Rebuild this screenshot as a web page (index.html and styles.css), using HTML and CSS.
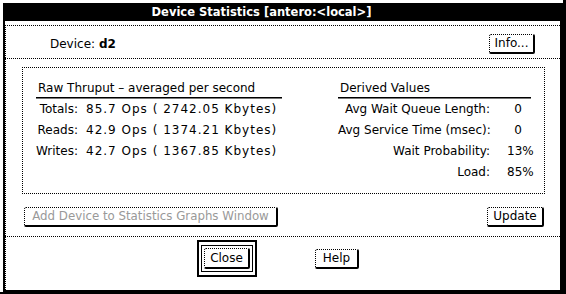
FILE: index.html
```html
<!DOCTYPE html>
<html lang="en">

<head>
    <meta charset="UTF-8" />
    <title>Device Statistics</title>
    <link rel="stylesheet" href="styles.css">
</head>

<body>
    <div class="shell">
        <div class="window">
            <div class="titlebar">Device Statistics [antero:&lt;local&gt;]</div>

            <div class="pane pane-device">
                <div class="device">Device: <b>d2</b></div>
                <button class="btn btn-info">Info...</button>
            </div>

            <div class="pane pane-stats">
                <div class="group">
                    <div class="col col-raw">
                        <div class="col-head">Raw Thruput &ndash; averaged per second</div>
                        <div class="row"><span class="lbl">Totals:</span><span class="val">85.7 Ops ( 2742.05 Kbytes)</span></div>
                        <div class="row"><span class="lbl">Reads:</span><span class="val">42.9 Ops ( 1374.21 Kbytes)</span></div>
                        <div class="row"><span class="lbl">Writes:</span><span class="val">42.7 Ops ( 1367.85 Kbytes)</span></div>
                    </div>
                    <div class="col col-derived">
                        <div class="col-head">Derived Values</div>
                        <div class="row"><span class="lbl">Avg Wait Queue Length:</span><span class="val">0</span></div>
                        <div class="row"><span class="lbl">Avg Service Time (msec):</span><span class="val">0</span></div>
                        <div class="row"><span class="lbl">Wait Probability:</span><span class="val">13%</span></div>
                        <div class="row"><span class="lbl">Load:</span><span class="val">85%</span></div>
                    </div>
                </div>
                <div class="actions">
                    <button class="btn btn-add" disabled>Add Device to Statistics Graphs Window</button>
                    <button class="btn btn-update">Update</button>
                </div>
            </div>

            <div class="pane pane-bottom">
                <div class="default-ring">
                    <div class="ring-inner">
                        <button class="btn btn-close">Close</button>
                    </div>
                </div>
                <button class="btn btn-help">Help</button>
            </div>
        </div>
    </div>
</body>

</html>
```

FILE: styles.css
```css
* {
    box-sizing: border-box;
}

body {
    margin: 0;
    background: #fff;
    color: #000;
    font-family: "DejaVu Sans", sans-serif;
    font-size: 12px;
}

/* FRAME */
.shell {
    width: 566px;
    height: 294px;
    padding: 3px 0 0 3px;
    border-right: 3px solid #000;
    border-bottom: 2px solid #000;
}

.window {
    display: flex;
    flex-direction: column;
    width: 560px;
    height: 289px;
    border-top: 1px solid #000;
    border-left: 2px solid #000;
    border-right: 3px solid #000;
    border-bottom: 2px solid #000;
}

.titlebar {
    height: 17px;
    padding-right: 42px;
    background: #000;
    color: #fff;
    font-weight: bold;
    font-size: 11.5px;
    line-height: 17px;
    text-align: center;
    margin-bottom: 4px;
}

/* PANES */
.pane {
    border-top: 1px dotted #000;
    border-left: 1px dotted #000;
}

.pane-device {
    height: 33px;
    display: flex;
    align-items: center;
    justify-content: space-between;
    padding: 3px 25px 0 44px;
}

.device b {
    font-weight: bold;
}

.pane-stats {
    padding: 8px 15px 0 16px;
    height: 178px;
}

.pane-bottom {
    flex: 1;
    display: flex;
    align-items: center;
    justify-content: center;
    gap: 58px;
    padding-right: 10px;
    padding-bottom: 10px;
}

/* GROUP BOX */
.group {
    height: 127px;
    border: 1px dotted #000;
    display: flex;
    justify-content: space-between;
    padding: 12px 13px 0 13px;
}

.col-head {
    height: 18px;
    line-height: 16px;
    padding-left: 2px;
    border-bottom: 1px solid #000;
    box-shadow: 0 1px 0 #777;
    margin-bottom: 1px;
}

.col-raw {
    width: 246px;
}

.col-derived {
    width: 193px;
}

.row {
    display: flex;
    height: 21px;
    line-height: 21px;
    white-space: pre;
}

.col-raw .lbl {
    width: 42px;
    text-align: right;
}

.col-raw .val {
    padding-left: 8px;
    letter-spacing: 1px;
}

.col-derived .lbl {
    width: 152px;
    text-align: right;
}

.col-derived .val {
    width: 22px;
    margin-left: 17px;
    text-align: center;
}

/* BUTTONS */
.btn {
    height: 20px;
    padding: 0 4px;
    background: #fff;
    color: #000;
    font-family: "DejaVu Sans", sans-serif;
    font-size: 12px;
    line-height: 17px;
    white-space: nowrap;
    border-top: 1px dotted #000;
    border-left: 1px dotted #000;
    border-right: 2px solid #000;
    border-bottom: 2px solid #000;
    border-radius: 2px;
}

.btn-info {
    width: 46px;
}

.actions {
    display: flex;
    justify-content: space-between;
    margin-top: 13px;
    padding-left: 2px;
    padding-right: 1px;
}

.btn-add {
    width: 254px;
    padding: 0 1px;
    font-size: 11.8px;
    color: #999;
}

.btn-update {
    width: 57px;
}

.default-ring {
    border: 2px solid #000;
    padding: 3px 2px;
}

.ring-inner {
    border: 1px solid #000;
    padding: 2px;
}

.btn-close {
    display: block;
    width: 46px;
    height: 21px;
}

.btn-help {
    width: 44px;
}
```
